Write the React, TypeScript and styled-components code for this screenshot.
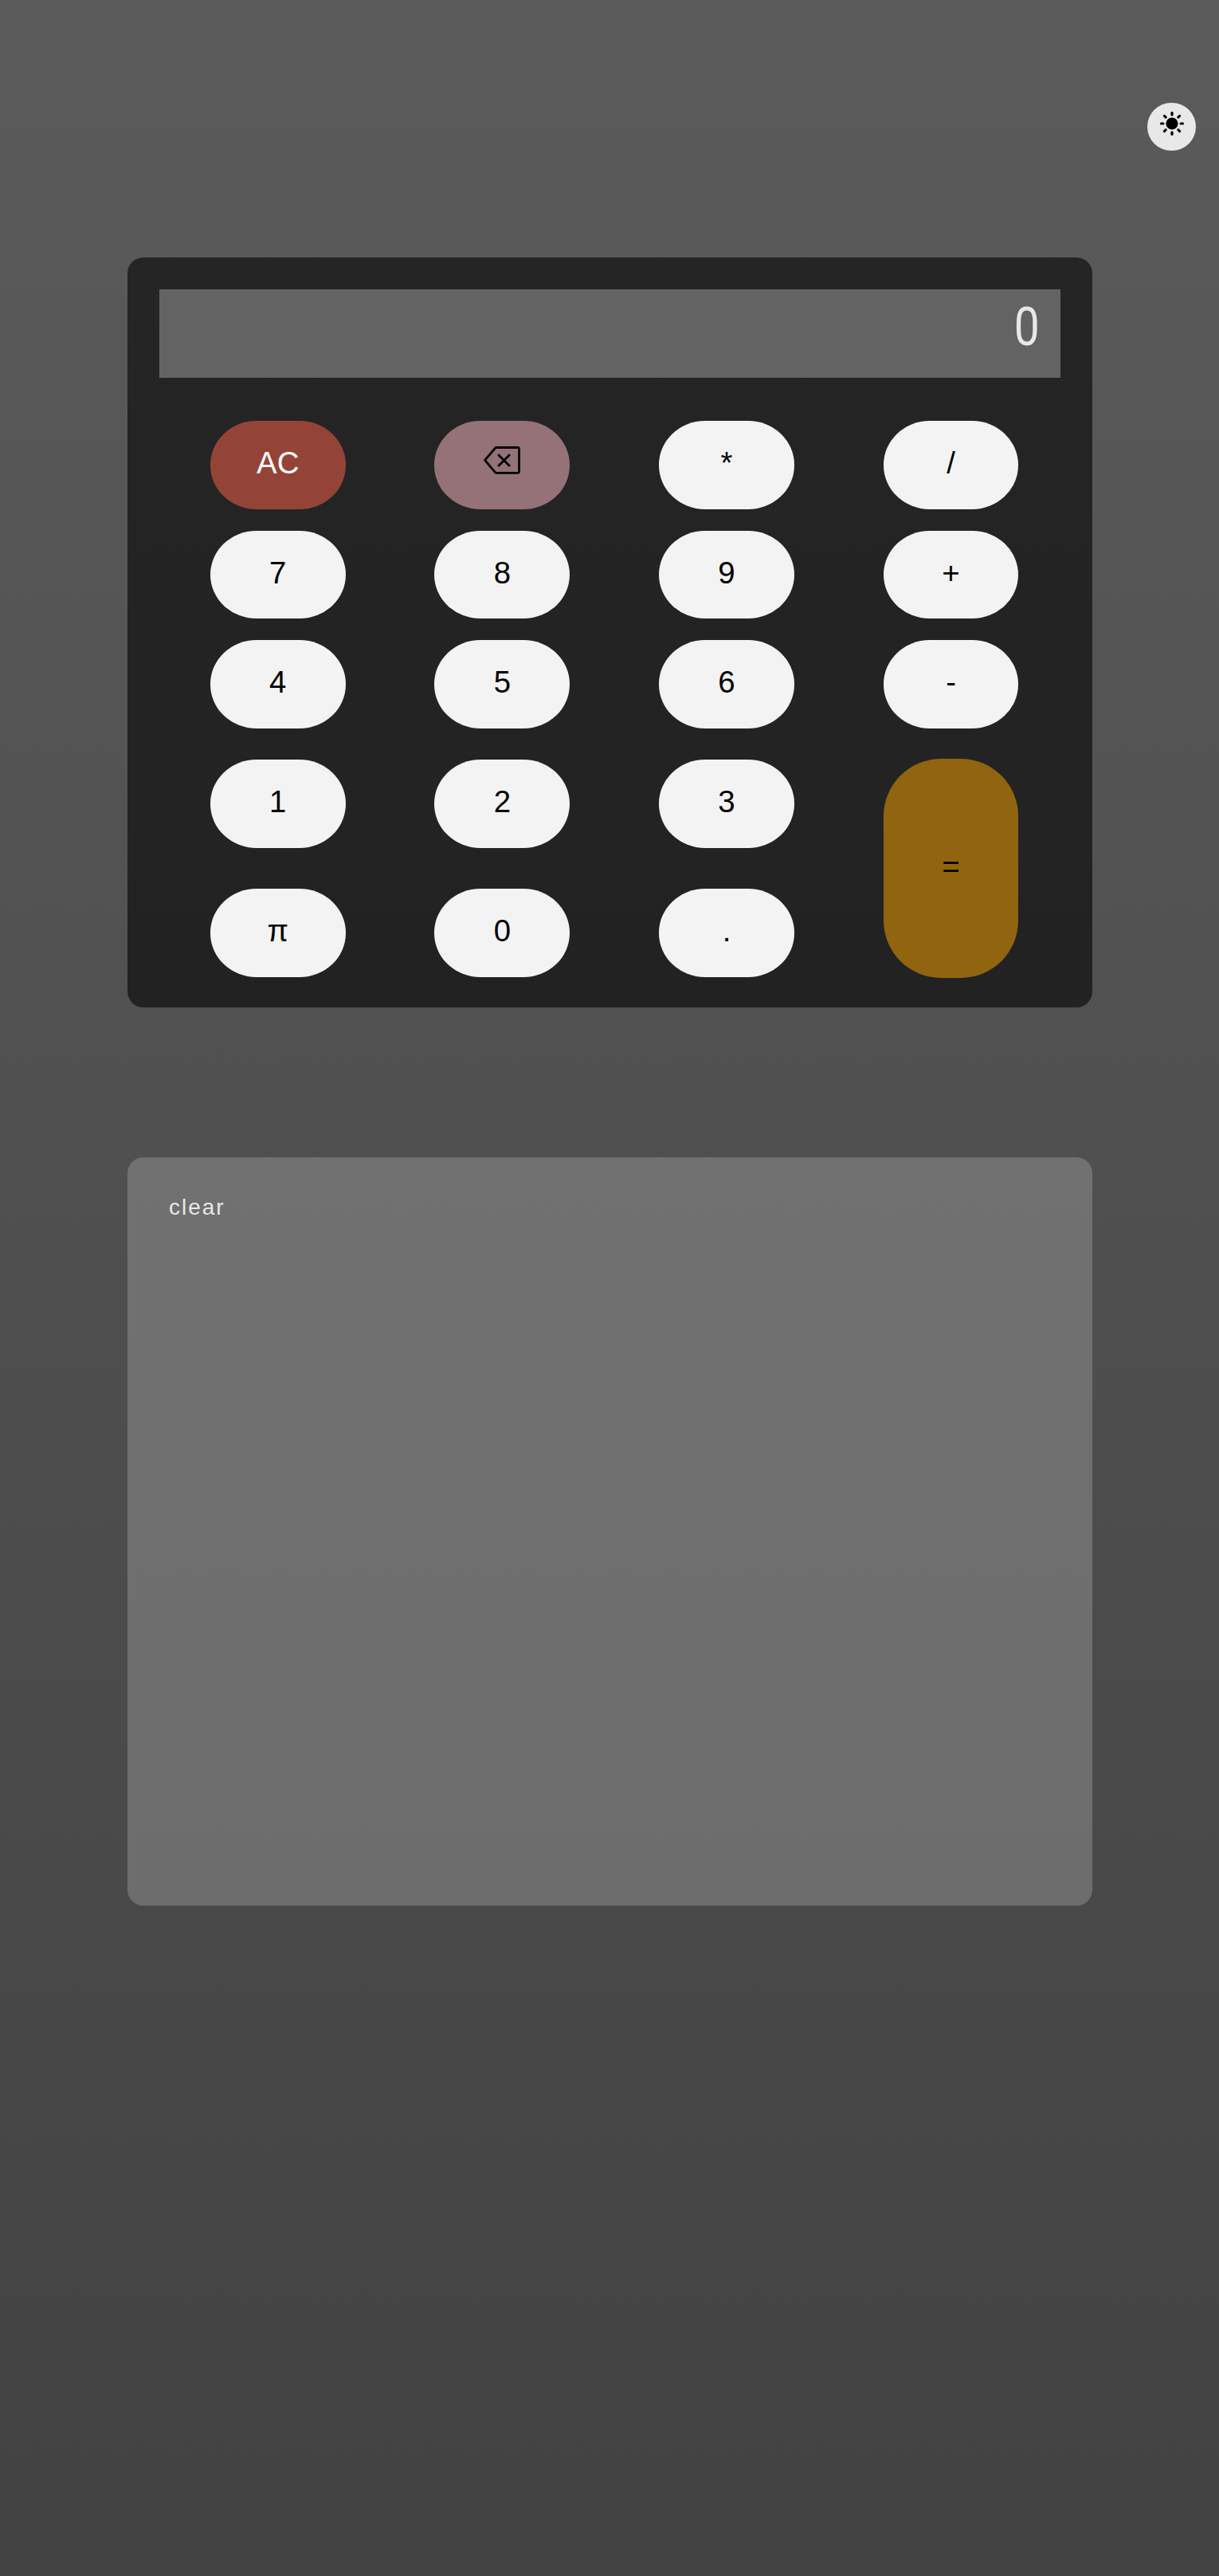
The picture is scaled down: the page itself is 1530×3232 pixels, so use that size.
import React, { useState } from "react";
import styled, { createGlobalStyle } from "styled-components";

const GlobalStyle = createGlobalStyle`
  * { box-sizing: border-box; }
  body { margin: 0; background: #434343; }
`;

const Page = styled.div`
  display: flex;
  flex-direction: column;
  min-height: 3232px;
  padding: 129px 159px 0 160px;
  background: linear-gradient(180deg, #5b5b5b, #424242);
  font-family: "Liberation Sans", Arial, sans-serif;
`;

const Header = styled.header`
  display: flex;
  justify-content: flex-end;
  height: 194.4px;
  margin-right: -130px;
`;

const ThemeToggle = styled.button`
  display: flex;
  justify-content: center;
  align-items: center;
  width: 61px;
  height: 60px;
  padding: 0 0 8px 1px;
  border: 0;
  border-radius: 30px;
  background: #e8e8e8;
  color: #000;
`;

const Calculator = styled.main`
  height: 940.6px;
  padding: 40px 39.7px 12px 40px;
  border-radius: 20px;
  background: rgba(0, 0, 0, 0.58);
`;

const Display = styled.div`
  display: flex;
  justify-content: flex-end;
  align-items: flex-start;
  height: 110.3px;
  padding: 9px 23.5px 0 0;
  background: #636363;
`;

const Readout = styled.output`
  display: block;
  color: #e8e8e8;
  font: 400 67px/76px Roboto, sans-serif;
  transform: scaleX(0.85);
`;

const Keypad = styled.div`
  display: grid;
  grid-template-columns: repeat(4, 281.6px);
  grid-template-rows: repeat(3, 137.5px) repeat(2, 162.1px);
  margin: 41.1px 0 0 8px;
  place-items: center;
`;

type Tone = "plain" | "clear" | "erase" | "equals";

const toneFill: Record<Tone, string> = {
  plain: "#f3f3f3",
  clear: "#944437",
  erase: "#947278",
  equals: "#916410",
};

const Key = styled.button<{ $tone: Tone }>`
  display: flex;
  justify-content: center;
  align-items: center;
  grid-row: ${({ $tone }) => ($tone === "equals" ? "span 2" : "auto")};
  width: 169.8px;
  height: ${({ $tone }) => ($tone === "equals" ? "275px" : "110.4px")};
  padding: ${({ $tone }) => ($tone === "equals" ? "0 0 2px" : "0 0 4.6px")};
  border: 0;
  border-radius: ${({ $tone }) => ($tone === "equals" ? "72px" : "58px / 55.2px")};
  background: ${({ $tone }) => toneFill[$tone]};
  color: ${({ $tone }) => ($tone === "clear" ? "#fff" : "#000")};
  font: 38.4px "Liberation Sans", Arial, sans-serif;
`;

const BackspaceIcon = styled.svg`
  margin-bottom: 8px;
`;

const History = styled.section`
  height: 939px;
  margin-top: 188px;
  padding: 47px 52px;
  border-radius: 20px;
  background: rgba(145, 145, 145, 0.5);
`;

const ClearHistory = styled.button`
  display: block;
  padding: 0;
  border: 0;
  background: none;
  color: #e8e8e8;
  font: 28px/32px "Liberation Sans", Arial, sans-serif;
  letter-spacing: 2px;
`;

const rayAngles = [0, 45, 90, 135, 180, 225, 270, 315];

function Sun() {
  return (
    <svg width="32" height="32" viewBox="-16 -16 32 32" aria-hidden="true">
      <circle r="7.6" fill="currentColor" />
      {rayAngles.map((angle) => (
        <path
          key={angle}
          d="M0-13.5V-11.1"
          transform={`rotate(${angle})`}
          stroke="currentColor"
          strokeWidth="3.2"
          strokeLinecap="round"
        />
      ))}
    </svg>
  );
}

function Backspace() {
  return (
    <BackspaceIcon width="46" height="35" viewBox="0 0 46 35" fill="none" stroke="#000" strokeWidth="2.8" strokeLinejoin="round" aria-hidden="true">
      <path d="M15.2 1.5H43a1.6 1.6 0 0 1 1.6 1.6V31.7a1.6 1.6 0 0 1-1.6 1.6H15.2L1.6 17.4Z" />
      <path d="M18.2 10.2 33 25M33 10.2 18.2 25" />
    </BackspaceIcon>
  );
}

const keys = ["AC", "⌫", "*", "/", "7", "8", "9", "+", "4", "5", "6", "-", "1", "2", "3", "=", "π", "0", "."];

const toneOf = (key: string): Tone =>
  key === "AC" ? "clear" : key === "⌫" ? "erase" : key === "=" ? "equals" : "plain";

export default function App() {
  const [entry, setEntry] = useState("0");

  const press = (key: string) => {
    if (key === "AC") setEntry("0");
    else if (key === "⌫") setEntry((value) => value.slice(0, -1) || "0");
    else if (key !== "=") setEntry((value) => (value === "0" ? key : value + key));
  };

  return (
    <>
      <GlobalStyle />
      <Page>
        <Header>
          <ThemeToggle aria-label="Toggle theme">
            <Sun />
          </ThemeToggle>
        </Header>
        <Calculator>
          <Display>
            <Readout>{entry}</Readout>
          </Display>
          <Keypad>
            {keys.map((key) => (
              <Key key={key} $tone={toneOf(key)} onClick={() => press(key)}>
                {key === "⌫" ? <Backspace /> : key}
              </Key>
            ))}
          </Keypad>
        </Calculator>
        <History>
          <ClearHistory>clear</ClearHistory>
        </History>
      </Page>
    </>
  );
}
